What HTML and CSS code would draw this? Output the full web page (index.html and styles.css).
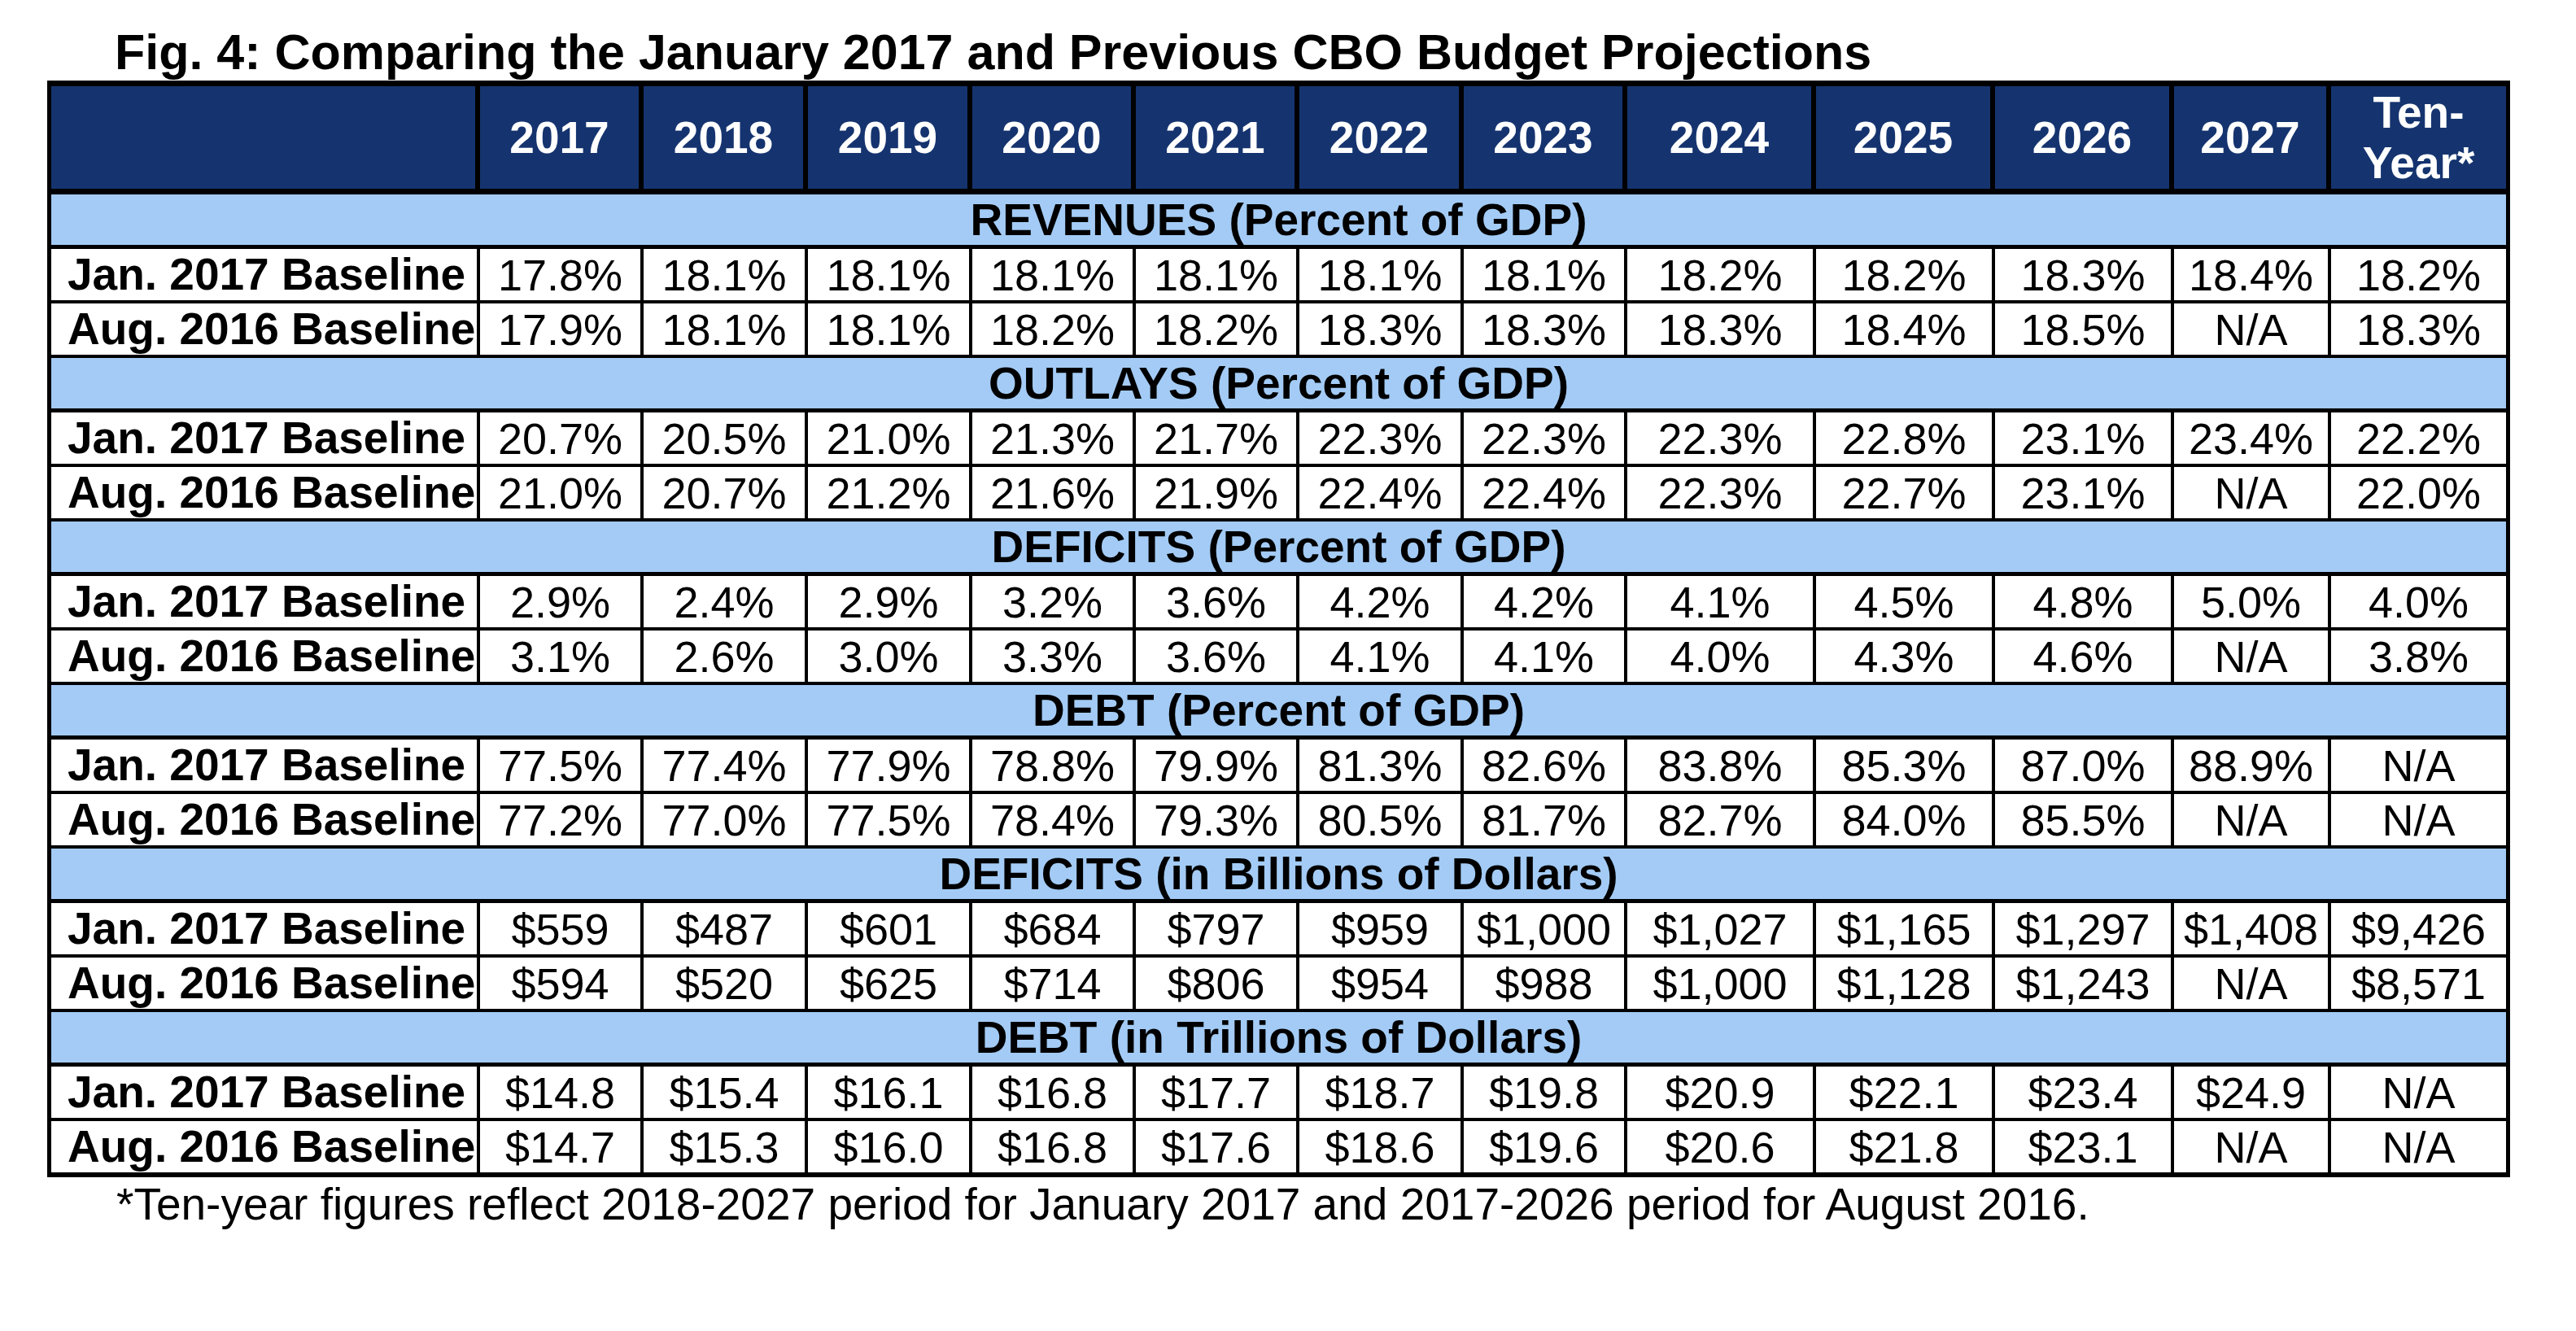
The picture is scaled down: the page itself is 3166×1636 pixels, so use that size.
FILE: index.html
```html
<!DOCTYPE html>
<html lang="en">
<head>
<meta charset="utf-8">
<title>Fig. 4: Comparing the January 2017 and Previous CBO Budget Projections</title>
<link rel="stylesheet" href="styles.css">
</head>
<body>
<div class="figure">
  <h1 class="title">Fig. 4: Comparing the January 2017 and Previous CBO Budget Projections</h1>
  <table class="budget">
    <colgroup>
      <col class="c-label">
      <col class="c-a"><col class="c-b"><col class="c-b"><col class="c-a"><col class="c-a"><col class="c-b"><col class="c-a">
      <col class="c-2024"><col class="c-w"><col class="c-w"><col class="c-2027"><col class="c-w">
    </colgroup>
    <thead>
      <tr class="head">
        <th></th><th>2017</th><th>2018</th><th>2019</th><th>2020</th><th>2021</th><th>2022</th><th>2023</th><th>2024</th><th>2025</th><th>2026</th><th>2027</th><th class="last">Ten-<br>Year*</th>
      </tr>
    </thead>
    <tbody>
      <tr class="section"><td colspan="13">REVENUES (Percent of GDP)</td></tr>
      <tr class="data"><td class="label">Jan. 2017 Baseline</td><td>17.8%</td><td>18.1%</td><td>18.1%</td><td>18.1%</td><td>18.1%</td><td>18.1%</td><td>18.1%</td><td>18.2%</td><td>18.2%</td><td>18.3%</td><td>18.4%</td><td class="last">18.2%</td></tr>
      <tr class="data"><td class="label">Aug. 2016 Baseline</td><td>17.9%</td><td>18.1%</td><td>18.1%</td><td>18.2%</td><td>18.2%</td><td>18.3%</td><td>18.3%</td><td>18.3%</td><td>18.4%</td><td>18.5%</td><td>N/A</td><td class="last">18.3%</td></tr>

      <tr class="section"><td colspan="13">OUTLAYS (Percent of GDP)</td></tr>
      <tr class="data"><td class="label">Jan. 2017 Baseline</td><td>20.7%</td><td>20.5%</td><td>21.0%</td><td>21.3%</td><td>21.7%</td><td>22.3%</td><td>22.3%</td><td>22.3%</td><td>22.8%</td><td>23.1%</td><td>23.4%</td><td class="last">22.2%</td></tr>
      <tr class="data"><td class="label">Aug. 2016 Baseline</td><td>21.0%</td><td>20.7%</td><td>21.2%</td><td>21.6%</td><td>21.9%</td><td>22.4%</td><td>22.4%</td><td>22.3%</td><td>22.7%</td><td>23.1%</td><td>N/A</td><td class="last">22.0%</td></tr>

      <tr class="section"><td colspan="13">DEFICITS (Percent of GDP)</td></tr>
      <tr class="data"><td class="label">Jan. 2017 Baseline</td><td>2.9%</td><td>2.4%</td><td>2.9%</td><td>3.2%</td><td>3.6%</td><td>4.2%</td><td>4.2%</td><td>4.1%</td><td>4.5%</td><td>4.8%</td><td>5.0%</td><td class="last">4.0%</td></tr>
      <tr class="data"><td class="label">Aug. 2016 Baseline</td><td>3.1%</td><td>2.6%</td><td>3.0%</td><td>3.3%</td><td>3.6%</td><td>4.1%</td><td>4.1%</td><td>4.0%</td><td>4.3%</td><td>4.6%</td><td>N/A</td><td class="last">3.8%</td></tr>

      <tr class="section"><td colspan="13">DEBT (Percent of GDP)</td></tr>
      <tr class="data"><td class="label">Jan. 2017 Baseline</td><td>77.5%</td><td>77.4%</td><td>77.9%</td><td>78.8%</td><td>79.9%</td><td>81.3%</td><td>82.6%</td><td>83.8%</td><td>85.3%</td><td>87.0%</td><td>88.9%</td><td class="last">N/A</td></tr>
      <tr class="data"><td class="label">Aug. 2016 Baseline</td><td>77.2%</td><td>77.0%</td><td>77.5%</td><td>78.4%</td><td>79.3%</td><td>80.5%</td><td>81.7%</td><td>82.7%</td><td>84.0%</td><td>85.5%</td><td>N/A</td><td class="last">N/A</td></tr>

      <tr class="section"><td colspan="13">DEFICITS (in Billions of Dollars)</td></tr>
      <tr class="data"><td class="label">Jan. 2017 Baseline</td><td>$559</td><td>$487</td><td>$601</td><td>$684</td><td>$797</td><td>$959</td><td>$1,000</td><td>$1,027</td><td>$1,165</td><td>$1,297</td><td>$1,408</td><td class="last">$9,426</td></tr>
      <tr class="data"><td class="label">Aug. 2016 Baseline</td><td>$594</td><td>$520</td><td>$625</td><td>$714</td><td>$806</td><td>$954</td><td>$988</td><td>$1,000</td><td>$1,128</td><td>$1,243</td><td>N/A</td><td class="last">$8,571</td></tr>

      <tr class="section"><td colspan="13">DEBT (in Trillions of Dollars)</td></tr>
      <tr class="data"><td class="label">Jan. 2017 Baseline</td><td>$14.8</td><td>$15.4</td><td>$16.1</td><td>$16.8</td><td>$17.7</td><td>$18.7</td><td>$19.8</td><td>$20.9</td><td>$22.1</td><td>$23.4</td><td>$24.9</td><td class="last">N/A</td></tr>
      <tr class="data final"><td class="label">Aug. 2016 Baseline</td><td>$14.7</td><td>$15.3</td><td>$16.0</td><td>$16.8</td><td>$17.6</td><td>$18.6</td><td>$19.6</td><td>$20.6</td><td>$21.8</td><td>$23.1</td><td>N/A</td><td class="last">N/A</td></tr>
    </tbody>
  </table>
  <p class="note">*Ten-year figures reflect 2018-2027 period for January 2017 and 2017-2026 period for August 2016.</p>
</div>
</body>
</html>
```

FILE: styles.css
```css
* {
  box-sizing: border-box;
}

body {
  margin: 0;
  background: #ffffff;
  color: #000000;
  font-family: "Liberation Sans", Arial, sans-serif;
}

.figure {
  padding: 30px 0 0 58px;
}

.title {
  margin: 0 0 0 83px;
  font-size: 61px;
  font-weight: bold;
  line-height: 69px;
  white-space: nowrap;
}

.budget {
  border-collapse: separate;
  border-spacing: 0;
  table-layout: fixed;
  width: 3027px;
  border-left: 5px solid #000;
  border-top: 7px solid #000;
}

.c-label { width: 527px; }
.c-a { width: 201px; }
.c-b { width: 202px; }
.c-2024 { width: 232px; }
.c-w { width: 220px; }
.c-2027 { width: 193px; }

.budget th,
.budget td {
  padding: 0;
  border-right: 4px solid #000;
  border-bottom: 4px solid #000;
  text-align: center;
  vertical-align: middle;
  white-space: nowrap;
  line-height: 1;
}

.head th {
  height: 133px;
  background: #15346f;
  color: #ffffff;
  font-size: 55px;
  font-weight: bold;
  line-height: 62px;
  border-right-width: 6px;
  border-bottom-width: 7px;
}

.budget .last {
  border-right-width: 5px;
}

.section td {
  height: 67px;
  background: #a3cbf5;
  font-size: 55px;
  font-weight: bold;
  border-bottom-width: 5px;
  border-right-width: 5px;
}

.data td {
  height: 67px;
  font-size: 54px;
  background: #ffffff;
}

.data td.label {
  text-align: left;
  padding-left: 20px;
  font-size: 55px;
  font-weight: bold;
}

.data.final td {
  height: 69px;
  border-bottom-width: 6px;
}

.note {
  margin: 2px 0 0 85px;
  font-size: 55px;
  line-height: 62px;
  white-space: nowrap;
}
```
